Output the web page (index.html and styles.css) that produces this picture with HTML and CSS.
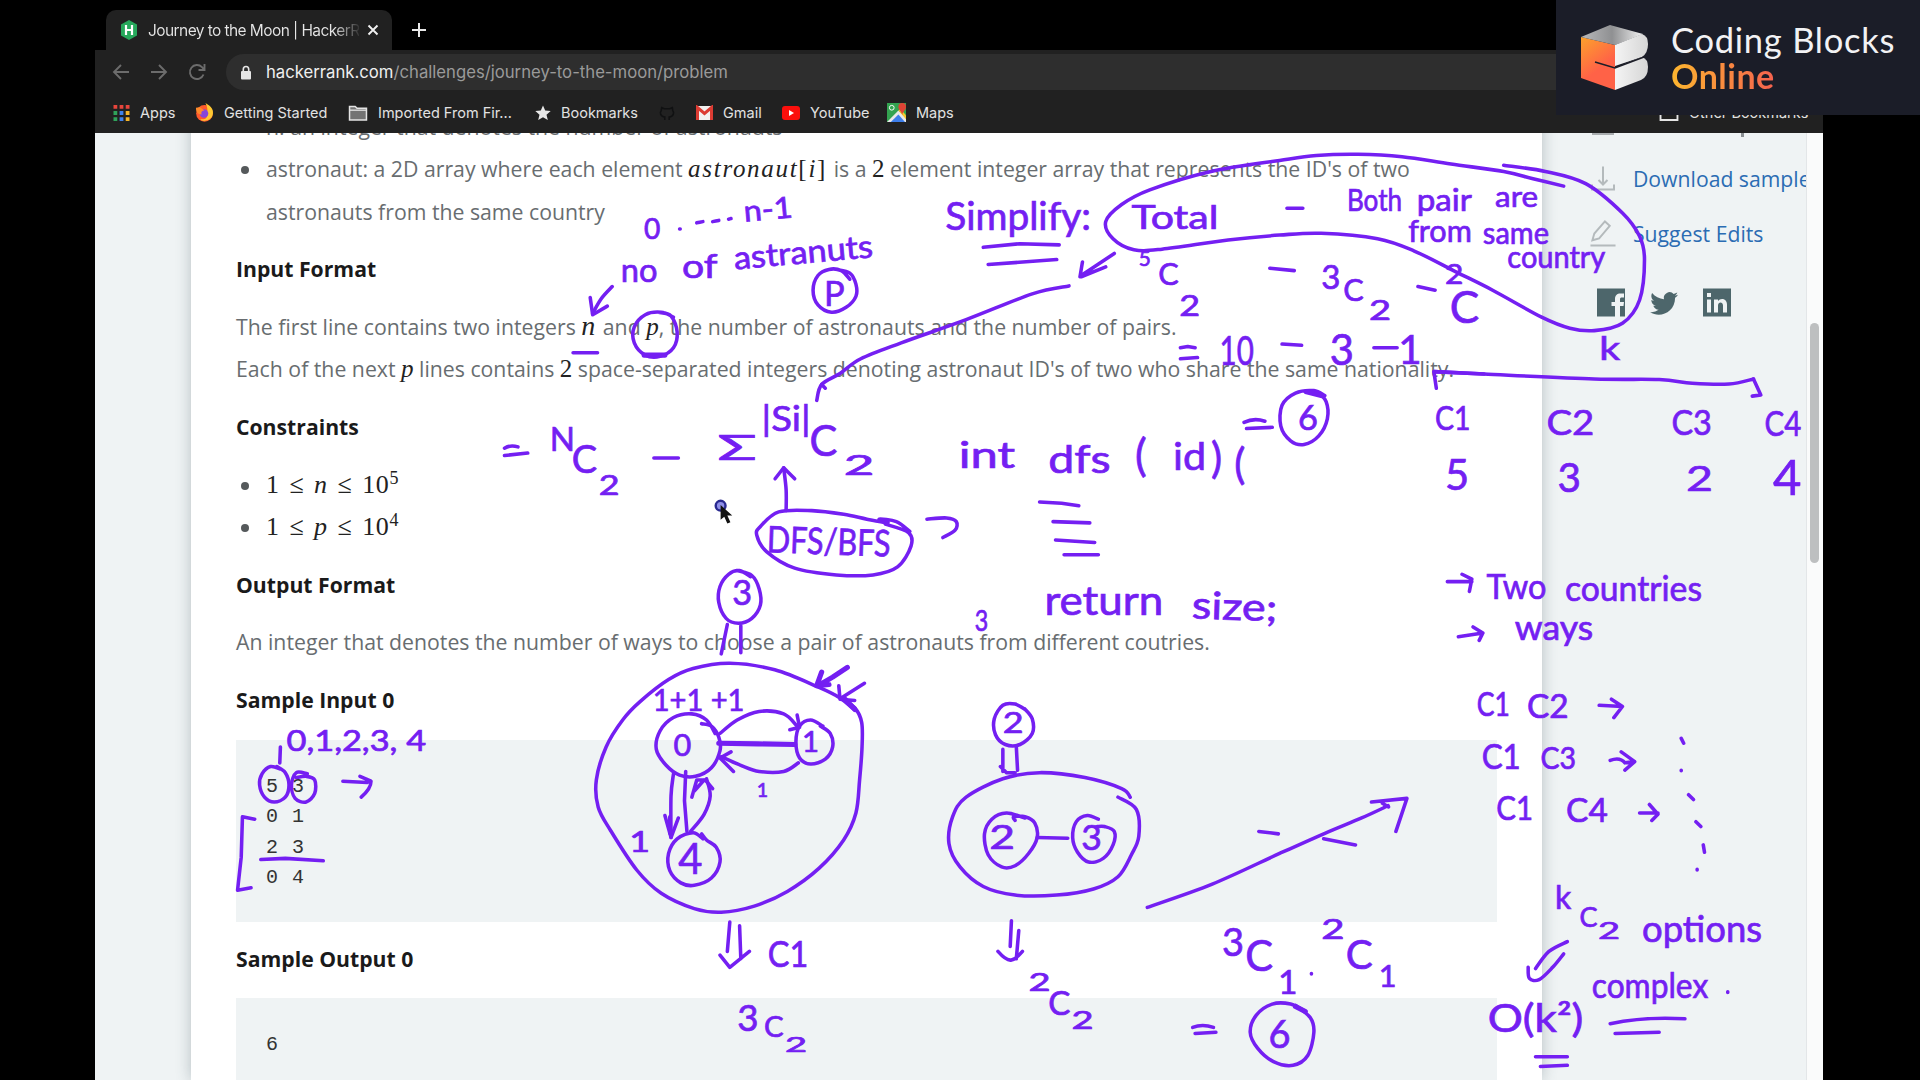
FILE: index.html
```html
<!DOCTYPE html>
<html lang="en">
<head>
<meta charset="utf-8">
<title>Journey to the Moon | HackerRank</title>
<link rel="stylesheet" href="styles.css">
</head>
<body>
<div class="screen">
  <div class="browser">
    <div class="tabs">
      <div class="tab">
        <svg class="fav" viewBox="0 0 20 20"><path d="M10 0l8 4.500v11L10 20l-8-4.500v-11z" fill="#26a85b"/><path d="M7 5v10M13 5v10M7 10h6" stroke="#fff" stroke-width="2.200"/></svg>
        <span class="tab-title">Journey to the Moon | HackerR</span>
        <svg class="x" viewBox="0 0 12 12"><path d="M1.500 1.500l9 9M10.500 1.500l-9 9" stroke="#f0f0f0" stroke-width="1.900"/></svg>
      </div>
      <svg class="plus" viewBox="0 0 14 14"><path d="M7 0v14M0 7h14" stroke="#e8e8e8" stroke-width="2"/></svg>
    </div>
    <div class="toolbar">
      <svg class="nav" viewBox="0 0 18 18"><path d="M17 9H2M9 2L2 9l7 7" /></svg>
      <svg class="nav" viewBox="0 0 18 18"><path d="M1 9h15M9 2l7 7-7 7" /></svg>
      <svg class="nav" viewBox="0 0 18 18"><path d="M15.500 11.500A7 7 0 1 1 14 4.200L16 6.500M16.500 1v6h-6" /></svg>
      <div class="url">
        <svg class="lock" viewBox="0 0 12 15"><rect x="1" y="6" width="10" height="8.500" rx="1" fill="#e6e6e6"/><path d="M3.300 7V4.200a2.700 2.700 0 0 1 5.400 0V7" fill="none" stroke="#e6e6e6" stroke-width="1.600"/></svg>
        <span class="url-text"><b>hackerrank.com</b>/challenges/journey-to-the-moon/problem</span>
      </div>
    </div>
    <div class="bookmarks">
      <div class="bm"><svg class="i17" viewBox="0 0 17 17"><g fill="#e8453c"><path d="M0 0h4v4H0zM6.500 0h4v4h-4zM13 0h4v4h-4z"/></g><path d="M0 6.500h4v4H0zM0 13h4v4H0z" fill="#2fa35a"/><path d="M6.500 6.500h4v4h-4zM6.500 13h4v4h-4z" fill="#3f83ee"/><path d="M13 6.500h4v4h-4zM13 13h4v4h-4z" fill="#f5b62a"/></svg><span class="bt">Apps</span></div>
      <div class="bm"><svg class="i19" viewBox="0 0 20 20"><circle cx="10" cy="11" r="8.800" fill="#ff5a2c"/><path d="M11 0c7 4 9 8 7.500 13-2 6-10 7-13 4 8 1 8-4 6-6 3-3 1-8-.5-11z" fill="#ffc832"/><circle cx="9.500" cy="11" r="4.500" fill="#8746d8"/><path d="M1 5c2 0 4-1 5 0l4 3c-3 0-4 2-3 4-4 0-6-2-6-7z" fill="#ff8a2a"/></svg><span class="bt">Getting Started</span></div>
      <div class="bm"><svg class="i20" viewBox="0 0 20 17"><path d="M1 1.500h6l2 2h10v12.500H1z" fill="#737373" stroke="#e4e4e4" stroke-width="1.600"/><path d="M1 5.500h18" stroke="#e4e4e4" stroke-width="1.400"/></svg><span class="bt">Imported From Fir...</span></div>
      <div class="bm"><svg class="i16" viewBox="0 0 16 16"><path d="M8 .5l2.200 5.100 5.500.5-4.200 3.600 1.300 5.400L8 12.200l-4.800 2.900 1.300-5.400L.3 6.100l5.500-.5z" fill="#e8e8e8"/></svg><span class="bt">Bookmarks</span></div>
      <div class="bm"><svg class="i18" viewBox="0 0 18 18"><path d="M6.500 17v-3.500C1 13 1 8 2.500 6.500L3 3l3 1.200h6L15 3l.5 3.500C17 8 17 13 11.500 13.500V17" fill="none" stroke="#101112" stroke-width="1.800"/></svg></div>
      <div class="bm"><svg class="i17" viewBox="0 0 17 14"><path d="M0 0h17v14H0z" fill="#f3f1f0"/><path d="M1.500 14V1.500l7 6 7-6V14" fill="none" stroke="#dc3c33" stroke-width="3"/></svg><span class="bt">Gmail</span></div>
      <div class="bm"><svg class="i18" viewBox="0 0 18 14"><rect width="18" height="14" rx="3" fill="#fb0f0c"/><path d="M7 4l5 3-5 3z" fill="#fff"/></svg><span class="bt">YouTube</span></div>
      <div class="bm"><svg class="i19" viewBox="0 0 20 20"><path d="M0 0h20v20H0z" fill="#33a350"/><path d="M0 20L12 8l8 8v4z" fill="#e8e8e8"/><path d="M4 20l8-8 7 8z" fill="#3d7eea"/><path d="M12 8l2-2 6 7v4z" fill="#f7c92e"/><path d="M16 0a4 4 0 0 1 4 4c0 4-4 5-4 9 0-4-4-5-4-9a4 4 0 0 1 4-4z" fill="#df4334"/><circle cx="5" cy="5" r="2.500" fill="none" stroke="#fff"/></svg><span class="bt">Maps</span></div>
      <div class="bm other"><svg class="i20" viewBox="0 0 20 17"><path d="M1 1.500h6l2 2h10v12.500H1z" fill="none" stroke="#e4e4e4" stroke-width="2"/></svg><span class="bt">Other Bookmarks</span></div>
    </div>
    <div class="page">
      <main class="card">
        <ul class="first">
          <li>n: an integer that denotes the number of astronauts</li>
          <li>astronaut: a 2D array where each element <span class="math m-ast">astronaut<i class="up">[</i>i<i class="up">]</i></span> is a <span class="math up">2</span> element integer array that represents the ID's of two<br>astronauts from the same country</li>
        </ul>
        <h4>Input Format</h4>
        <p>The first line contains two integers <span class="math m-n">n</span> and <span class="math">p</span>, the number of astronauts and the number of pairs.<br>Each of the next <span class="math">p</span> lines contains <span class="math up">2</span> space-separated integers denoting astronaut ID's of two who share the same nationality.</p>
        <h4>Constraints</h4>
        <ul>
          <li><span class="math up ineq">1 ≤ <i>n</i> ≤ 10<sup>5</sup></span></li>
          <li><span class="math up ineq">1 ≤ <i>p</i> ≤ 10<sup>4</sup></span></li>
        </ul>
        <h4>Output Format</h4>
        <p>An integer that denotes the number of ways to choose a pair of astronauts from different coutries.</p>
        <h4>Sample Input 0</h4>
        <pre class="in">5 3
0 1
2 3
0 4</pre>
        <h4>Sample Output 0</h4>
        <pre>6</pre>
      </main>
      <aside class="side">
        <div class="cut"><span class="cut-a"></span><span class="cut-b"></span></div>
        <div class="link"><svg class="si" viewBox="0 0 26 26"><path d="M13 1v18M8.500 14.500L13 19l4.500-4.500M2 19v5h22v-5" /></svg><span>Download sample test cases</span></div>
        <div class="link"><svg class="si" viewBox="0 0 26 28"><path d="M2 21l2-7L15 1.500l5 4.500L9 19zM0 26.500h26" /></svg><span>Suggest Edits</span></div>
        <div class="social">
          <svg viewBox="0 0 28 28"><path fill-rule="evenodd" d="M0 0h28v28h-5V17.500h3.500l.5-4h-4V11c0-1.500.5-2 2-2h2V5h-3.500C20 5 18 7 18 10.500v3h-3.500v4H18V28H0z"/></svg>
          <svg viewBox="0 0 28 28"><path d="M28 6.300c-1 .5-2 .8-3.200.9 1.200-.7 2-1.800 2.500-3.100-1.100.6-2.300 1.100-3.600 1.400A5.700 5.700 0 0 0 14 10.700C9.300 10.500 5 8.200 2.100 4.600.6 7.200 1.300 10.500 3.900 12.200c-1 0-1.900-.3-2.600-.7 0 2.700 1.800 5.200 4.600 5.700-.9.200-1.700.2-2.600.1.700 2.300 2.900 3.900 5.300 4A11.500 11.500 0 0 1 .1 23.700C10 29.900 25 24 25.100 9.200 26.300 8.500 27.200 7.500 28 6.300z"/></svg>
          <svg viewBox="0 0 28 28"><path fill-rule="evenodd" d="M0 0h28v28H0zM4 11v13h4V11zM4 4.500v4h4v-4zM11 11v13h4v-7c0-4 5-4 5 0v7h4v-8c0-6-6.500-7-9-3.500V11z"/></svg>
        </div>
      </aside>
      <div class="track"><div class="thumb"></div></div>
    </div>
  </div>

  <svg class="ink" viewBox="0 0 1568 882">
    <g class="strokes">
      <polyline points="1277,152 1252,146 1228,140 1185,134 1145,128 1109,126 1075,127 1045,131 989,140 939,155 916,167 903,181 909,195 926,204 949,203.500 1003,196 1045,192 1079,190.500 1125,195 1155,205 1189,222 1219,237 1259,259 1282,268 1302,270 1325,264 1339,245 1343,212 1339,193 1325,174 1295,150 1262,140 1228,135"/>
      <polyline points="555,187 555.500,187"/><polyline points="569,182 574,181"/><polyline points="582,181 587,180"/><polyline points="595,179 597,178.500"/>
      <polyline points="500,234 491,244 484,256"/><path d="M482 243l2 14 12-7"/>
      <path d="M468 288h20M803 202l30-3 32 1M807 216l56-4"/>
      <path d="M910 207l-27 18M903 218l-20 8M884 214l-2 12 8-4"/>
      <path d="M1051 170h13M1037 219l20 2M1158 234l14 3M964 284l6-1 6 1M964 293l14-1M1047 281l16 1M1122 284h19"/>
      <polyline points="873,233.500 843,240 789,261 736,280 703,293 686,305 671,314 667,327"/><path d="M671 314l3 3"/>
      <path d="M1173 317l-2-13.500 41 2"/><polyline points="1171,303.500 1212,305.500 1302,309.500 1355,310 1382,313 1412,313.600 1432,309.500"/><path d="M1432 309.500l6 13-7 1"/>
      <path d="M1016 345q8-4 17-1M1018 350l21-1"/>
      <polyline points="1082,323 1073,319 1058,321 1047,331 1046,348 1054,360 1065,363 1077,356 1084,342 1083,328 1076,321 1066,320"/>
      <path class="fat" d="M1067 320l12 3"/>
      <polyline points="694,228 687,221 677,220 668,225 664,237 668,249 679,255 691,251 699,242 699,232 694,223 683,220"/>
      <polyline points="550,259 540,255 527,257 518,267 518,280 527,290 539,291 550,284 553,271 548,258 538,255"/>
      <path class="fat" d="M526 290h17"/>
      <path d="M412 366q5-3 11-1M412 372l19-2M534 374h20"/>
      <polyline points="642,417 642,400 640,382"/><path d="M633 391l7-9 9 9"/>
      <polyline points="743,434 732,426 718,424 725,427 708,424 689,420 663,417 636,418 621,430 618,437 626,450.500 649,464 683,469.500 713,469.500 733,463 744,446 742,435 723,428"/>
      <polyline points="757,424 773,423 781,426 780,433 770,439"/>
      <path d="M849 410l18 1 14 2M860 426l30 1M862 441l32 2M869 453h28"/>
      <polyline points="613,471 604,466 595,469 588,479 587,492 593,505 603,509 614,505 621,494 620,481 614,470 602,466"/>
      <path d="M594 510l-5 24M605 511v22"/>
      <polyline points="696,577 698,580 686,570 668,561 632.700,547 596,541.700 566,546 546,555 522.700,573 508.500,588 495,610 487,637 488.500,659 498.500,678 520,710.500 540,729.500 567,742 589,745 616,740 643,728 669,709 689,686 699,664 702,637 704,610 703.700,590 698,578 686,570"/>
      <path class="fat" d="M692 545l-12 8-12 7M671 549l-4 11 10-1M690 571l8 8"/>
      <path d="M706 558l-19 12M685 560l1 11 12 1"/>
      <polyline points="584,599 577,588 565,583 550,586 539,597 536,612 544,625 555,633 568,634 581,627 588,613 587,602 581,593 573,591"/>
      <polyline points="672,593 662,588 653,593 650,606 653,619 662,624 674,620 680,610 678,599 670,593"/>
      <polyline points="588,599 602,588 620,581 640,583 651,593"/><path d="M645 596l8-2-2-10"/>
      <path class="fat" d="M587 607l32 .5 30 .5"/>
      <polyline points="652,623 640,630 620,630 605,625 589,618"/><path d="M597 614l-9 5 11 11"/>
      <polyline points="550,632 548,650 548,684"/><path d="M543 666l5 18 6-16M547 667v14M560 630l-1 24 2 25"/>
      <polyline points="564,679 575,665 580,650 577,636"/><path d="M565 651l4-14 7 0 6 7M567 646l8-9"/>
      <polyline points="574,685 566,680 553,685 546,697 547,711 556,721 567,723 581,717 588,704 585,692 577,686 573,681"/>
      <polyline points="838,580 829,575 819,576 812,587 813,600 821,608 833,608 843,599 843,587 837,579"/>
      <path d="M819 612v18M830 610l1 19M817 626l5 5h7"/>
      <polyline points="923,651 916,644 886,635 849,631 819,636 789,651 778,667 775,689 784,708 803,724 829,731 863,731 893,726 913,716 924,698 930,683 928,661 913,651"/>
      <polyline points="837,668 822,664 810,669 804,681 807,698 818,708 829,707 840,697 847,684 845,672 837,667 828,667 829,670"/>
      <polyline points="897,669 888,666 879,671 876,684 880,696 889,704 901,701 909,690 910,679 902,675 896,675"/>
      <path d="M847 684l25 .5"/>
      <polyline points="937,741 990,722 1045,697 1082,680.500 1112,668 1133.600,658"/><path d="M1120 655l29-3-9 27M1028 679l16 2M1081 685l26 5M1129 656l5 3"/>
      <path d="M596 753l-2 24M604 756l1 27M588 780l8 10 16-13M826 752l-1 21M832 760l-2 23M815 777q7 8 11 7t9-7"/>
      <path d="M974 839q8-3 17 0M976 844l17-1"/>
      <polyline points="1066,826 1054,820 1039,820 1026,829 1021,843 1027,856 1040,867 1056,870 1068,862 1073,843 1070,831 1058,821"/>
      <path class="fat" d="M1058 822l8 4"/>
      <path d="M1182 475h20M1194 469l8 4-2 10M1191 520l20-3M1203 512l8 5-3 6M1306 576l19 1M1316 571l9 6-7 9M1315 621q8-3 12 2l8-1M1324 614l11 8-8 7M1339 664l15 0M1347 657l7 8-5 5"/>
      <path d="M1373 603l2 4M1373 629v.5M1379 649l4 4M1385 671l4 4M1391 690l1 6M1386 710v.5M1411 810v.5M1071 795v.5"/>
      <polyline points="1280,769 1265,777 1254,791"/><polyline points="1277,779 1268,790 1257,800 1249,799 1248,790"/>
      <path d="M1315 836q28-6 61-4M1319 844l36-1M1254 863h26M1258 871l22-1"/>
      <path d="M229 610l-.5 13M280 638l20 1M294 634l9 4q0 6-8 13M208 669l-10-2-1 33-3 27 11-2M213 702l20-1 31 2"/>
      <polyline points="229,628 221,626 214,632 212,641 216,651 224,655 233,651 236,641 233,631 226,626"/>
      <polyline points="251,632 242,631 238,641 241,652 250,655 257,648 257,637 250,634 242,635"/>
    </g>
    <g class="hand" transform="translate(0 1)">
      <text x="526" y="194" font-size="23">0</text>
      <text x="608" y="180" font-size="24" textLength="40" transform="rotate(-5 608 180)">n-1</text>
      <text x="507" y="229" font-size="26" textLength="30">no</text>
      <text x="557" y="226" font-size="27" textLength="29">of</text>
      <text x="600" y="219" font-size="26" textLength="114" transform="rotate(-5 600 219)">astranuts</text>
      <text x="673" y="249" font-size="28">P</text>
      <text x="772" y="187" font-size="31" textLength="119">Simplify:</text>
      <text x="924" y="186" font-size="27" textLength="71">Total</text>
      <text x="1100" y="171" font-size="25" textLength="45">Both</text>
      <text x="1157" y="171" font-size="25" textLength="45">pair</text>
      <text x="1221" y="168" font-size="24" textLength="35">are</text>
      <text x="1150" y="197" font-size="25" textLength="52">from</text>
      <text x="1211" y="198" font-size="25" textLength="54">same</text>
      <text x="1231" y="218" font-size="25" textLength="80">country</text>
      <text x="930" y="216" font-size="17">5</text><text x="946" y="232" font-size="25">C</text><text x="963" y="257" font-size="23" textLength="17">2</text>
      <text x="1079" y="235" font-size="27">3</text><text x="1097" y="245" font-size="25">C</text><text x="1118" y="260" font-size="22" textLength="18">2</text>
      <text x="1180" y="231" font-size="22" textLength="15">2</text><text x="1184" y="263" font-size="36">C</text>
      <text x="996" y="297" font-size="33" textLength="28">10</text><text x="1086" y="297" font-size="34">3</text><text x="1142" y="296" font-size="33">1</text>
      <text x="1306" y="293" font-size="27" textLength="17">k</text>
      <text x="1060" y="350" font-size="28">6</text>
      <text x="1172" y="350" font-size="27" textLength="29">C1</text><text x="1263" y="354" font-size="29" textLength="39">C2</text><text x="1365" y="354" font-size="29" textLength="33">C3</text><text x="1441" y="355" font-size="28" textLength="30">C4</text>
      <text x="1180" y="399" font-size="34">5</text><text x="1272" y="401" font-size="33">3</text><text x="1377" y="400" font-size="29" textLength="22">2</text><text x="1448" y="403" font-size="40">4</text>
      <text x="449" y="367" font-size="27">N</text><text x="467" y="385" font-size="31">C</text><text x="489" y="403" font-size="22" textLength="17">2</text>
      <text x="586" y="375" font-size="28" textLength="32">Σ</text><text x="622" y="351" font-size="29" textLength="40">|Si|</text><text x="661" y="371" font-size="34">C</text><text x="689" y="387" font-size="22" textLength="25">2</text>
      <text x="783" y="381" font-size="30" textLength="46">int</text><text x="856" y="385" font-size="32" textLength="51">dfs</text><text x="927" y="384" font-size="36">(</text><text x="958" y="383" font-size="32" textLength="27">id</text><text x="989" y="385" font-size="34">)</text><text x="1008" y="390" font-size="34">(</text>
      <text x="626" y="450" font-size="30" textLength="101" transform="rotate(2 626 450)">DFS/BFS</text>
      <text x="853" y="501" font-size="33" textLength="97">return</text><text x="973" y="504" font-size="31" textLength="70" transform="rotate(2 973 504)">size;</text>
      <text x="796" y="514" font-size="24" textLength="11">3</text><text x="598" y="493" font-size="28">3</text>
      <text x="533" y="580" font-size="25" textLength="75" xml:space="preserve">1+1 +1</text>
      <text x="550" y="616" font-size="25">0</text><text x="655" y="613" font-size="24">1</text><text x="618" y="650" font-size="16">1</text><text x="554" y="713" font-size="34">4</text><text x="514" y="695" font-size="23" textLength="17">1</text>
      <text x="819" y="598" font-size="23" textLength="17">2</text><text x="808" y="692" font-size="26" textLength="21">2</text><text x="883" y="693" font-size="29">3</text>
      <text x="627" y="789" font-size="30" textLength="33">C1</text>
      <text x="602" y="841" font-size="30">3</text><text x="624" y="846" font-size="24">C</text><text x="641" y="858" font-size="18" textLength="18">2</text>
      <text x="840" y="808" font-size="20" textLength="18">2</text><text x="856" y="828" font-size="27">C</text><text x="875" y="839" font-size="20" textLength="18">2</text>
      <text x="998" y="780" font-size="31">3</text><text x="1017" y="792" font-size="34">C</text><text x="1044" y="811" font-size="27">1</text>
      <text x="1079" y="766" font-size="22" textLength="19">2</text><text x="1099" y="790" font-size="33">C</text><text x="1126" y="805" font-size="25">1</text><text x="1036" y="855" font-size="31">6</text>
      <text x="1214" y="488" font-size="28" textLength="49">Two</text><text x="1278" y="490" font-size="29" textLength="112">countries</text><text x="1237" y="522" font-size="28" textLength="64">ways</text>
      <text x="1206" y="584" font-size="26" textLength="27">C1</text><text x="1247" y="585" font-size="26" textLength="34">C2</text>
      <text x="1210" y="627" font-size="28" textLength="32">C1</text><text x="1258" y="627" font-size="25" textLength="29">C3</text>
      <text x="1222" y="669" font-size="27" textLength="30">C1</text><text x="1279" y="670" font-size="26" textLength="34">C4</text>
      <text x="1270" y="741" font-size="26">k</text><text x="1290" y="756" font-size="22">C</text><text x="1305" y="766" font-size="19" textLength="18">2</text>
      <text x="1341" y="768" font-size="30" textLength="98">options</text><text x="1300" y="814" font-size="29" textLength="95">complex</text>
      <text x="1215" y="842" font-size="31" textLength="78">O(k²)</text>
      <text x="234" y="612" font-size="24" textLength="114" xml:space="preserve">0,1,2,3, 4</text>
    </g>
    <circle cx="588.500" cy="413" r="4" fill="#8f8fe8" stroke="#2a2a90" stroke-width="2"/>
    <path d="M588.500 412.500v12l3-2.500 2.500 5.500 2.500-1-2.500-5.500h4z" fill="#111"/>
  </svg>

  <div class="brand">
    <svg class="cube" viewBox="0 0 67 65"><defs><linearGradient id="o" x1="0" y1="0" x2=".5" y2="1"><stop offset="0" stop-color="#fca22c"/><stop offset=".7" stop-color="#ff6247"/></linearGradient><linearGradient id="g" x1="0" y1="0" x2="1" y2="0"><stop offset="0" stop-color="#b9b9bb"/><stop offset=".5" stop-color="#8f9092"/><stop offset="1" stop-color="#f2f2f2"/></linearGradient><linearGradient id="w" x1="0" y1="0" x2="1" y2="0"><stop offset="0" stop-color="#f4f4f4"/><stop offset="1" stop-color="#d6d6d6"/></linearGradient></defs>
      <path d="M0 12L34 20V65L0 53z" fill="url(#o)"/><path d="M0 12L29 0 62 9 34 20z" fill="url(#g)"/><path d="M34 20l27-11q6 2 6 10 0 9-6 13L34 41z" fill="url(#w)"/><path d="M34 43l27-11q6 2 6 10 0 10-7 13L34 65z" fill="url(#w)"/><path d="M14 37l20 6 29-11" fill="none" stroke="#1c1d28" stroke-width="1.500"/></svg>
    <div class="words"><div class="w1">Coding Blocks</div><div class="w2">Online</div></div>
  </div>
</div>
<script src="ink.js"></script>
</body>
</html>
```
FILE: styles.css
```css
* { box-sizing: border-box; }
body { margin: 0; background: #000; }
.screen { position: relative; width: 1920px; height: 1080px; overflow: hidden; background: #000; }
.browser { width: 1728px; height: 1080px; margin-left: 95px; display: flex; flex-direction: column; font-family: Inter, Roboto, sans-serif; }
svg { flex: none; display: block; }

.tabs { height: 50px; padding: 10px 0 0 11px; display: flex; align-items: flex-start; background: #000; }
.tab { width: 286px; height: 40px; background: #212121; border-radius: 10px 10px 0 0; display: flex; align-items: center; padding: 0 13px; }
.fav { width: 20px; height: 20px; }
.tab-title { margin-left: 9px; width: 212px; overflow: hidden; white-space: nowrap; font-size: 15.500px; letter-spacing: -.58px; background: linear-gradient(90deg, #e6e6e6 88%, #333 100%); background-clip: text; color: transparent; }
.x { width: 12px; height: 12px; margin-left: 8px; }
.plus { width: 14px; height: 14px; margin: 13px 0 0 20px; }

.toolbar { height: 44px; background: #212121; display: flex; align-items: center; padding: 0 0 0 17px; }
.nav { width: 18px; height: 18px; margin-right: 20px; fill: none; stroke: #6c6c6c; stroke-width: 1.900; }
.url { flex: 1; height: 36px; background: #2e2e2e; border-radius: 18px 0 0 18px; display: flex; align-items: center; padding-left: 14px; }
.lock { width: 12px; height: 15px; }
.url-text { margin-left: 14px; font-size: 16.700px; white-space: nowrap; color: #9a9a9a; }
.url-text b { font-weight: 400; color: #f0f0f0; }

.bookmarks { height: 39px; background: #212121; display: grid; grid-template-columns: 82px 153px 187px 123px 38px 86px 105px 772px 150px; align-items: center; padding: 0 0 2px 18px; }
.bm { display: flex; align-items: center; gap: 10px; }
.bt { font-size: 14.500px; color: #e2e2e2; white-space: nowrap; }
.i16 { width: 16px; height: 16px; } .i17 { width: 17px; height: 16px; } .i18 { width: 18px; height: 16px; }
.i19 { width: 19px; height: 19px; } .i20 { width: 20px; height: 16px; }

.page { flex: 1; min-height: 0; display: flex; background: #eff3f4; overflow: hidden; }
.card { margin-left: 96px; width: 1351px; flex: none; background: #fff; box-shadow: 0 0 14px rgba(60, 80, 90, .32); padding: 0 45px; margin-top: -27px; font-family: "Open Sans", "Noto Sans", sans-serif; font-size: 21.250px; line-height: 42.600px; color: #686d70; }
.card ul, .card p, .card h4 { margin: 0 0 15px; padding: 0; white-space: nowrap; }
.card ul { list-style: none; }
.card li { padding-left: 30px; position: relative; }
.card .first li + li { margin-top: -.6px; }
.card li::before { content: ""; position: absolute; left: 5px; top: 18px; width: 8px; height: 8px; border-radius: 50%; background: #55595b; }
.card h4 { font-size: 21.200px; font-weight: 700; color: #1a1a1a; }
.math { display: inline-block; font-family: "Liberation Serif", serif; font-style: italic; font-size: 25px; line-height: 30px; color: #222; }
.up { font-style: normal; }
.m-ast { letter-spacing: 1.700px; width: 140px; }
.m-n { width: 16px; font-size: 28px; }
.ineq { font-size: 26px; word-spacing: 2.500px; letter-spacing: .7px; }
.ineq sup { font-size: 18px; line-height: 0; vertical-align: 9px; }
.card pre { margin: 18px 0 16px; padding: 32px 30px 0; height: 182px; width: 1261px; background: #eff3f4; font-family: "Liberation Mono", monospace; font-size: 20px; letter-spacing: 1px; line-height: 30.600px; color: #333; }
.card h4:has(+ pre) { margin-bottom: 0; }

.side { flex: 1; min-width: 0; overflow: hidden; padding-left: 48px; font-family: "Open Sans", sans-serif; }
.cut { height: 4px; display: flex; gap: 127px; padding-left: 2px; }
.cut-a { width: 22px; height: 2px; background: #a9adaf; }
.cut-b { width: 3px; height: 4px; background: #8a8f92; }
.link { display: flex; align-items: center; gap: 17px; height: 55px; white-space: nowrap; font-size: 21.200px; color: #2b6cb3; margin-left: 2px; }
.cut + .link { margin-top: 14px; }
.si { width: 26px; height: 27px; fill: none; stroke: #b4babc; stroke-width: 2; margin-left: -2px; }
.social { display: flex; gap: 25px; margin: 27px 0 0 7px; fill: #4d666b; }
.social svg { width: 28px; height: 29px; }
.track { width: 17px; background: #fafbfb; border-left: 1px solid #e3e6e8; padding: 190px 0 0 3px; }
.thumb { width: 9px; height: 240px; border-radius: 5px; background: #bdbfc0; }

.ink { position: absolute; left: 0; top: 0; width: 1920px; height: 1080px; }
.strokes { fill: none; stroke: #741ff2; stroke-width: 2.900; stroke-linecap: round; stroke-linejoin: round; }
.fat { stroke-width: 4.200; }
.hand { font-family: Lato, "Open Sans", sans-serif; fill: #741ff2; stroke: #741ff2; stroke-width: .6; }

.brand { position: absolute; left: 1556px; top: 0; width: 364px; height: 115px; background: #1b1d28; display: flex; padding: 25px 0 0 25px; }
.cube { width: 67px; height: 65px; }
.words { margin-left: 23px; font-family: Lato, sans-serif; white-space: nowrap; }
.w1 { font-size: 34.500px; letter-spacing: .75px; line-height: 36px; margin-top: -3px; color: #f2f2f4; }
.w2 { width: 106px; font-size: 34px; letter-spacing: .5px; line-height: 36px; font-weight: 700; background: linear-gradient(90deg, #fdb62f, #f5604f); background-clip: text; color: transparent; }
```
FILE: ink.js
```js
// Turns each pen polyline into a smooth Catmull-Rom curve.
document.querySelectorAll('.strokes polyline').forEach(function (line) {
  var n = line.getAttribute('points').trim().split(/[\s,]+/).map(Number);
  var p = [];
  for (var i = 0; i < n.length; i += 2) p.push([n[i], n[i + 1]]);
  var d = 'M' + p[0];
  for (i = 0; i < p.length - 1; i++) {
    var a = p[i - 1] || p[i], b = p[i], c = p[i + 1], e = p[i + 2] || c;
    d += 'C' + [b[0] + (c[0] - a[0]) / 6, b[1] + (c[1] - a[1]) / 6,
                c[0] - (e[0] - b[0]) / 6, c[1] - (e[1] - b[1]) / 6, c[0], c[1]];
  }
  var path = document.createElementNS('http://www.w3.org/2000/svg', 'path');
  path.setAttribute('d', d);
  line.replaceWith(path);
});
// Stretches the handwritten labels over their full width.
document.querySelectorAll('.hand text[textLength]').forEach(function (t) {
  t.setAttribute('lengthAdjust', 'spacingAndGlyphs');
});
```
